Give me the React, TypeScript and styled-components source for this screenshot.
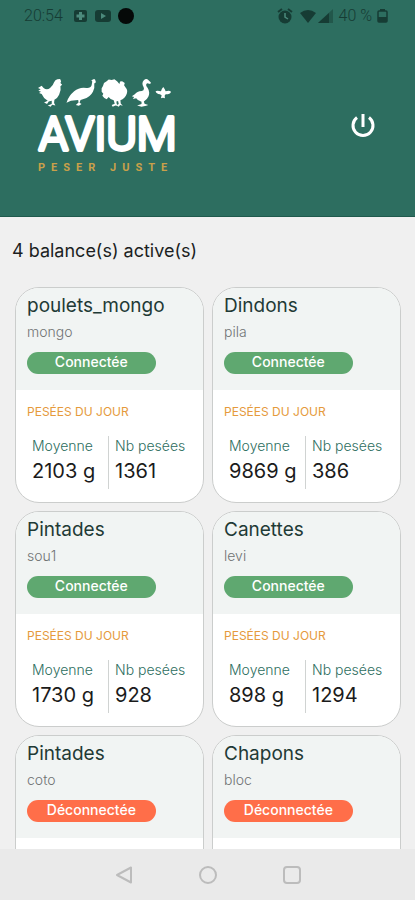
import React from "react";
import styled, { createGlobalStyle } from "styled-components";

const GlobalStyle = createGlobalStyle`
  *, *::before, *::after { box-sizing: border-box; }
  body {
    margin: 0;
    background: #f0f0f0;
    font-family: Inter, "Noto Sans", sans-serif;
    color: #1c1f1f;
  }
  h1, h2, h3, p, dl, dt, dd, ul { margin: 0; padding: 0; font-weight: 400; }
`;

const Screen = styled.div`
  display: flex;
  flex-direction: column;
  height: 100vh;
  overflow: hidden;
`;

const Header = styled.header`
  flex: none;
  background: #2d6e60;
  border-bottom: 1px solid #1f5a4d;
`;

const StatusBar = styled.div`
  display: flex;
  align-items: center;
  justify-content: space-between;
  height: 32px;
  padding: 0 27px 0 24px;
  color: #163c34;
`;

const StatusGroup = styled.div<{ $gap: number }>`
  display: flex;
  align-items: center;
  gap: ${(p) => p.$gap}px;
`;

const StatusText = styled.span`
  font-family: Roboto, sans-serif;
  font-size: 16px;
  font-weight: 300;
  line-height: 20px;
`;

const Brand = styled.div`
  display: flex;
  align-items: center;
  justify-content: space-between;
  padding: 46px 38px 40px;
`;

const Logo = styled.div`
  display: flex;
  flex-direction: column;
  align-items: flex-start;
  color: #ffffff;
`;

const Wordmark = styled.h1`
  display: flex;
  margin-top: 4px;
`;

const WordmarkDrawing = styled.svg`
  overflow: visible;
`;

const WordmarkText = styled.text`
  font-family: Roboto, sans-serif;
  font-size: 46px;
  font-weight: 300;
  fill: currentColor;
  stroke: currentColor;
  stroke-width: 4px;
  stroke-linejoin: round;
`;

const Tagline = styled.p`
  margin-top: 6px;
  font-family: Roboto, sans-serif;
  font-size: 11px;
  font-weight: 700;
  line-height: 16px;
  letter-spacing: 6px;
  color: #c9a04a;
`;

const PowerButton = styled.button`
  display: grid;
  place-items: center;
  padding: 0;
  border: 0;
  background: none;
  color: #ffffff;
  cursor: pointer;
`;

const Content = styled.main`
  flex: 1;
  min-height: 0;
  overflow: hidden;
  padding: 22px 14px 0 15px;
`;

const Summary = styled.h2`
  margin: 0 -3px 24px;
  font-size: 18px;
  line-height: 24px;
`;

const Grid = styled.div`
  display: grid;
  grid-template-columns: 1fr 1fr;
  gap: 8px;
`;

const Card = styled.article`
  min-height: 216px;
  overflow: hidden;
  border: 1px solid #cbcdcc;
  border-radius: 24px;
  background: #ffffff;
`;

const CardHead = styled.div`
  height: 102px;
  padding: 6px 11px 0;
  background: #f1f4f3;
`;

const CardTitle = styled.h3`
  font-size: 19px;
  line-height: 24px;
  color: #1f3a36;
`;

const Place = styled.p`
  margin-top: 2px;
  font-size: 14px;
  font-weight: 300;
  line-height: 24px;
  color: #707373;
`;

const Status = styled.p<{ $online: boolean }>`
  width: 78%;
  margin-top: 8px;
  padding-bottom: 2px;
  border-radius: 11px;
  background: ${(p) => (p.$online ? "#5fa870" : "#ff6e49")};
  color: #ffffff;
  font-size: 14px;
  font-weight: 500;
  line-height: 20px;
  text-align: center;
`;

const CardBody = styled.div`
  padding: 13px 11px;
`;

const SectionTitle = styled.h4`
  margin: 0 0 15px;
  font-size: 12px;
  font-weight: 400;
  line-height: 18px;
  color: #e59a3c;
`;

const Stats = styled.dl`
  display: grid;
  grid-template-columns: 81px 1fr;
`;

const Stat = styled.div<{ $divided?: boolean }>`
  height: 53px;
  padding-left: ${(p) => (p.$divided ? 6 : 5)}px;
  border-left: ${(p) => (p.$divided ? "1px solid #d0d3d2" : "0")};
  white-space: nowrap;
`;

const StatLabel = styled.dt`
  font-size: 14px;
  font-weight: 300;
  line-height: 19px;
  color: #2d6e60;
`;

const StatValue = styled.dd`
  font-size: 20px;
  line-height: 32px;
  color: #1b1b1b;
`;

const NavBar = styled.nav`
  flex: none;
  display: flex;
  justify-content: center;
  align-items: center;
  gap: 64px;
  height: 51px;
  background: #eaeaea;
`;

const NavButton = styled.button`
  display: grid;
  place-items: center;
  width: 20px;
  height: 20px;
  padding: 0;
  border: 0;
  background: none;
  color: #bcbcbc;
`;

type Scale = {
  title: string;
  place: string;
  online: boolean;
  average?: string;
  count?: string;
};

const scales: Scale[] = [
  { title: "poulets_mongo", place: "mongo", online: true, average: "2103 g", count: "1361" },
  { title: "Dindons", place: "pila", online: true, average: "9869 g", count: "386" },
  { title: "Pintades", place: "sou1", online: true, average: "1730 g", count: "928" },
  { title: "Canettes", place: "levi", online: true, average: "898 g", count: "1294" },
  { title: "Pintades", place: "coto", online: false },
  { title: "Chapons", place: "bloc", online: false },
];

function Birds() {
  return (
    <svg width="134" height="30" viewBox="24 22 400 88" fill="currentColor" aria-hidden="true">
      {/* hen */}
      <path d="M24 51 L35 44 L40 50 Q50 59 60 51 Q69 44 72 34 L76 28 L82 25 L90 24 L93 31 L91 36 L96 41 L91 46 Q94 58 87 71 Q82 82 73 86 L72 96 L76 103 L66 101 L62 107 L53 103 L65 99 L65 89 L56 91 L51 99 L42 94 L53 89 Q40 82 35 69 L27 66 L33 62 L25 59 L32 55 Z" />
      {/* guinea fowl */}
      <path d="M109 95 Q115 75 132 61 Q148 47 169 51 Q181 52 184 43 L186 32 L183 29 L189 25 L194 25 L197 34 L192 38 Q194 51 188 62 Q179 79 160 84 L151 87 L148 95 L154 99 L146 104 L137 102 L145 94 L144 87 L136 88 Q122 88 109 95 Z" />
      {/* turkey */}
      <path d="M214 62 L214 52 L218 45 L221 36 L229 31 L235 26 L244 27 L252 25 L260 31 L267 39 L269 32 L275 31 L283 36 L281 43 L285 49 Q293 57 289 68 Q284 82 270 88 L271 97 L277 104 L269 102 L265 107 L258 103 L265 99 L263 90 L258 91 L259 99 L263 105 L255 103 L247 107 L244 102 L253 98 L250 88 Q239 85 235 78 L229 85 L222 81 L216 74 L219 68 Z" />
      {/* goose */}
      <path d="M304 76 L313 70 Q319 61 334 60 Q343 58 339 48 Q332 36 340 28 Q347 21 354 28 L361 35 L359 39 L350 37 Q343 42 351 50 Q359 62 354 76 Q350 86 340 91 L342 98 L353 102 L347 104 L333 107 L320 103 L333 99 L333 92 Q322 90 317 82 L307 84 L311 78 Z" />
      {/* chick */}
      <path d="M375 61 Q379 58 391 61 L394 53 L398 48 L402 54 L405 61 Q416 57 421 62 Q419 70 405 70 L402 74 L403 82 L397 80 L391 82 L393 73 L388 70 Q377 69 375 61 Z" />
    </svg>
  );
}

function LeftIcons() {
  return (
    <svg width="61" height="16" viewBox="0 0 61 16" aria-hidden="true">
      <rect x="0" y="2" width="13" height="12" rx="2" fill="#163c34" />
      <path d="M6.500 4v8M2.500 8h8" stroke="#4c8a7c" strokeWidth="3" />
      <rect x="21" y="2" width="16" height="12" rx="3" fill="#163c34" />
      <path d="M27 5l5 3-5 3z" fill="#4c8a7c" />
      <circle cx="52" cy="8" r="8" fill="#050908" />
    </svg>
  );
}

function SignalIcons() {
  return (
    <svg width="57" height="16" viewBox="0 0 57 16" fill="#163c34" aria-hidden="true">
      <circle cx="8" cy="9" r="6.500" />
      <path d="M1 4l4-3M15 4l-4-3" stroke="#163c34" strokeWidth="2" />
      <path d="M8 5v4l3 2" fill="none" stroke="#4c8a7c" strokeWidth="1.500" />
      <path d="M23 5Q31-1 39 5L31 15z" />
      <path d="M41 15L56 1v14z" opacity="0.450" />
      <path d="M41 15L52 5v10z" />
    </svg>
  );
}

function BatteryIcon() {
  return (
    <svg width="11" height="16" viewBox="0 0 11 16" fill="#163c34" aria-hidden="true">
      <rect x="3" y="1" width="5" height="2" />
      <rect x="1" y="3" width="9" height="11" rx="1" fill="none" stroke="#163c34" strokeWidth="1.500" />
      <rect x="1" y="9" width="9" height="5" />
    </svg>
  );
}

function ScaleCard({ scale }: { scale: Scale }) {
  return (
    <Card>
      <CardHead>
        <CardTitle>{scale.title}</CardTitle>
        <Place>{scale.place}</Place>
        <Status $online={scale.online}>{scale.online ? "Connectée" : "Déconnectée"}</Status>
      </CardHead>
      {scale.average && (
        <CardBody>
          <SectionTitle>PESÉES DU JOUR</SectionTitle>
          <Stats>
            <Stat>
              <StatLabel>Moyenne</StatLabel>
              <StatValue>{scale.average}</StatValue>
            </Stat>
            <Stat $divided>
              <StatLabel>Nb pesées</StatLabel>
              <StatValue>{scale.count}</StatValue>
            </Stat>
          </Stats>
        </CardBody>
      )}
    </Card>
  );
}

export default function App() {
  return (
    <>
      <GlobalStyle />
      <Screen>
        <Header>
          <StatusBar>
            <StatusGroup $gap={11}>
              <StatusText>20:54</StatusText>
              <LeftIcons />
            </StatusGroup>
            <StatusGroup $gap={5}>
              <SignalIcons />
              <StatusText>40 %</StatusText>
              <BatteryIcon />
            </StatusGroup>
          </StatusBar>
          <Brand>
            <Logo>
              <Birds />
              <Wordmark>
                <WordmarkDrawing width="140" height="42" viewBox="0 0 140 42">
                  <WordmarkText x="1" y="38">AVIUM</WordmarkText>
                </WordmarkDrawing>
              </Wordmark>
              <Tagline>PESER JUSTE</Tagline>
            </Logo>
            <PowerButton type="button" aria-label="Déconnexion">
              <svg width="28" height="28" viewBox="0 0 28 28" fill="none" stroke="currentColor" strokeWidth="3" aria-hidden="true">
                <path d="M14 1v13" />
                <path d="M8 4.500a10 10 0 1 0 12 0" />
              </svg>
            </PowerButton>
          </Brand>
        </Header>
        <Content>
          <Summary>4 balance(s) active(s)</Summary>
          <Grid>
            {scales.map((scale) => (
              <ScaleCard key={scale.place} scale={scale} />
            ))}
          </Grid>
        </Content>
        <NavBar aria-label="Navigation système">
          <NavButton type="button" aria-label="Retour">
            <svg width="18" height="18" viewBox="0 0 18 18" fill="none" stroke="currentColor" strokeWidth="2" strokeLinejoin="round" aria-hidden="true">
              <path d="M16 1.500v15L2 9z" />
            </svg>
          </NavButton>
          <NavButton type="button" aria-label="Accueil">
            <svg width="18" height="18" viewBox="0 0 18 18" fill="none" stroke="currentColor" strokeWidth="2" aria-hidden="true">
              <circle cx="9" cy="9" r="8" />
            </svg>
          </NavButton>
          <NavButton type="button" aria-label="Applications récentes">
            <svg width="18" height="18" viewBox="0 0 18 18" fill="none" stroke="currentColor" strokeWidth="2" aria-hidden="true">
              <rect x="1" y="1" width="16" height="16" rx="3" />
            </svg>
          </NavButton>
        </NavBar>
      </Screen>
    </>
  );
}
